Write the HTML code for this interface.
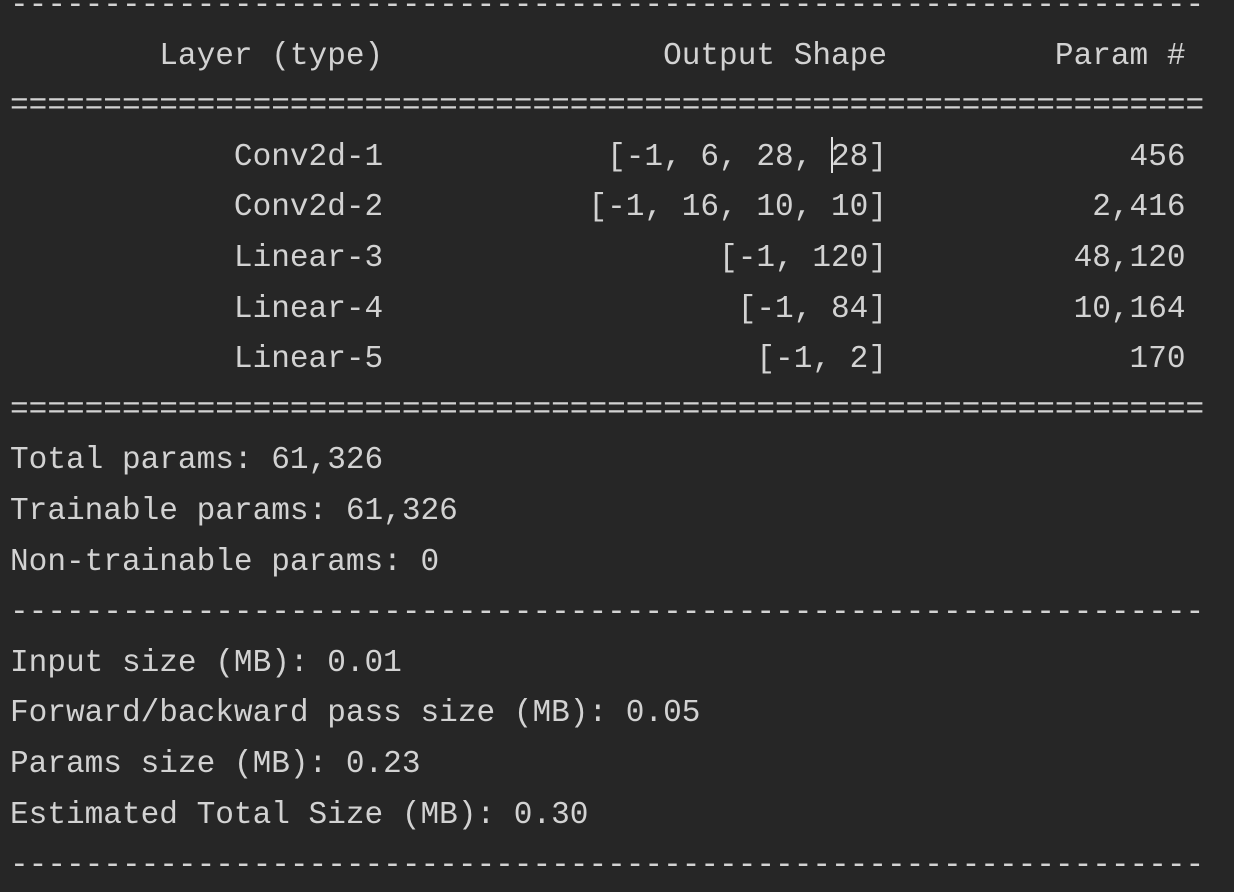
<!DOCTYPE html>
<html><head><meta charset="utf-8"><style>
html,body{margin:0;padding:0;background:#262626;width:1234px;height:875px;overflow:hidden}
pre{margin:0;position:absolute;left:10px;top:-19px;font-family:"Liberation Mono",monospace;font-size:31.1px;line-height:50.6px;color:#d2d2d2;white-space:pre}
.c{position:absolute;left:831px;top:137px;width:2px;height:36px;background:#e0e0e0}
</style></head><body><pre>----------------------------------------------------------------
        Layer (type)               Output Shape         Param #
================================================================
            Conv2d-1            [-1, 6, 28, 28]             456
            Conv2d-2           [-1, 16, 10, 10]           2,416
            Linear-3                  [-1, 120]          48,120
            Linear-4                   [-1, 84]          10,164
            Linear-5                    [-1, 2]             170
================================================================
Total params: 61,326
Trainable params: 61,326
Non-trainable params: 0
----------------------------------------------------------------
Input size (MB): 0.01
Forward/backward pass size (MB): 0.05
Params size (MB): 0.23
Estimated Total Size (MB): 0.30
----------------------------------------------------------------</pre><div class="c"></div></body></html>
